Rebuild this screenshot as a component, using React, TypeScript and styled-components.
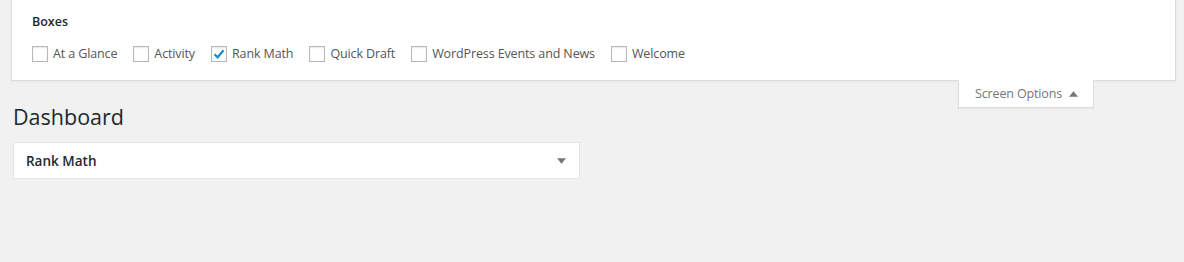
import React from "react";
import styled, { createGlobalStyle } from "styled-components";

const GlobalStyle = createGlobalStyle`
  html, body {
    margin: 0;
    padding: 0;
    background: #f1f1f1;
    font-family: "Open Sans", "Noto Sans", sans-serif;
    color: #444;
  }
`;

const Page = styled.div`
  padding: 0 8px 0 11px;
`;

const ScreenPanel = styled.div`
  background: #fff;
  border: 1px solid #ddd;
  border-top: none;
  box-shadow: 0 1px 3px rgba(0, 0, 0, 0.04);
  padding: 12px 20px 18px 20px;
  height: 81px;
  box-sizing: border-box;
`;

const Legend = styled.div`
  font-size: 12.5px;
  font-weight: 600;
  color: #23282d;
  line-height: 20px;
`;

const BoxList = styled.div`
  display: flex;
  align-items: center;
  margin-top: 13px;
  gap: 16px;
`;

const Option = styled.label`
  display: flex;
  align-items: center;
  gap: 5px;
  font-size: 12.5px;
  letter-spacing: -0.12px;
  color: #555;
  line-height: 18px;
`;

const Check = styled.span`
  width: 16px;
  height: 16px;
  box-sizing: border-box;
  border: 1px solid #b4b9be;
  background: #fff;
  box-shadow: inset 0 1px 2px rgba(0, 0, 0, 0.1);
  display: flex;
  align-items: center;
  justify-content: center;
`;

const HeadRow = styled.div`
  display: flex;
  justify-content: space-between;
  align-items: flex-start;
`;

const Title = styled.h1`
  margin: 22px 0 0 2px;
  font-size: 21.5px;
  font-weight: 400;
  line-height: 27px;
  color: #23282d;
`;

const Tab = styled.div`
  margin: -1px 82px 0 0;
  height: 28px;
  box-sizing: border-box;
  background: #fff;
  border: 1px solid #ddd;
  border-top: none;
  box-shadow: 0 1px 1px rgba(0, 0, 0, 0.04);
  padding: 0 15px 0 16px;
  display: flex;
  align-items: center;
  gap: 7px;
  font-size: 12.5px;
  letter-spacing: -0.15px;
  color: #72777c;
`;

const Postbox = styled.div`
  margin: 12px 0 0 2px;
  width: 567px;
  height: 37px;
  box-sizing: border-box;
  background: #fff;
  border: 1px solid #e5e5e5;
  box-shadow: 0 1px 1px rgba(0, 0, 0, 0.04);
  display: flex;
  align-items: center;
  justify-content: space-between;
  padding: 0 13px 0 12px;
`;

const BoxTitle = styled.span`
  font-size: 13.5px;
  font-weight: 600;
  color: #23282d;
`;

const Arrow = ({ up }: { up?: boolean }) => (
  <svg width="9" height="6" viewBox="0 0 10 6">
    <path d={up ? "M0 6 L5 0 L10 6 Z" : "M0 0 L10 0 L5 6 Z"} fill="#72777c" />
  </svg>
);

const boxes = [
  { label: "At a Glance", checked: false },
  { label: "Activity", checked: false },
  { label: "Rank Math", checked: true },
  { label: "Quick Draft", checked: false },
  { label: "WordPress Events and News", checked: false },
  { label: "Welcome", checked: false },
];

export default function App() {
  return (
    <Page>
      <GlobalStyle />
      <ScreenPanel>
        <Legend>Boxes</Legend>
        <BoxList>
          {boxes.map((b) => (
            <Option key={b.label}>
              <Check>
                {b.checked && (
                  <svg width="14" height="14" viewBox="0 0 14 14">
                    <path
                      d="M2.5 7.2 L5.6 10.3 L11.6 3.2"
                      fill="none"
                      stroke="#1e8cbe"
                      strokeWidth="2.2"
                    />
                  </svg>
                )}
              </Check>
              {b.label}
            </Option>
          ))}
        </BoxList>
      </ScreenPanel>
      <HeadRow>
        <Title>Dashboard</Title>
        <Tab>
          Screen Options
          <Arrow up />
        </Tab>
      </HeadRow>
      <Postbox>
        <BoxTitle>Rank Math</BoxTitle>
        <Arrow />
      </Postbox>
    </Page>
  );
}
